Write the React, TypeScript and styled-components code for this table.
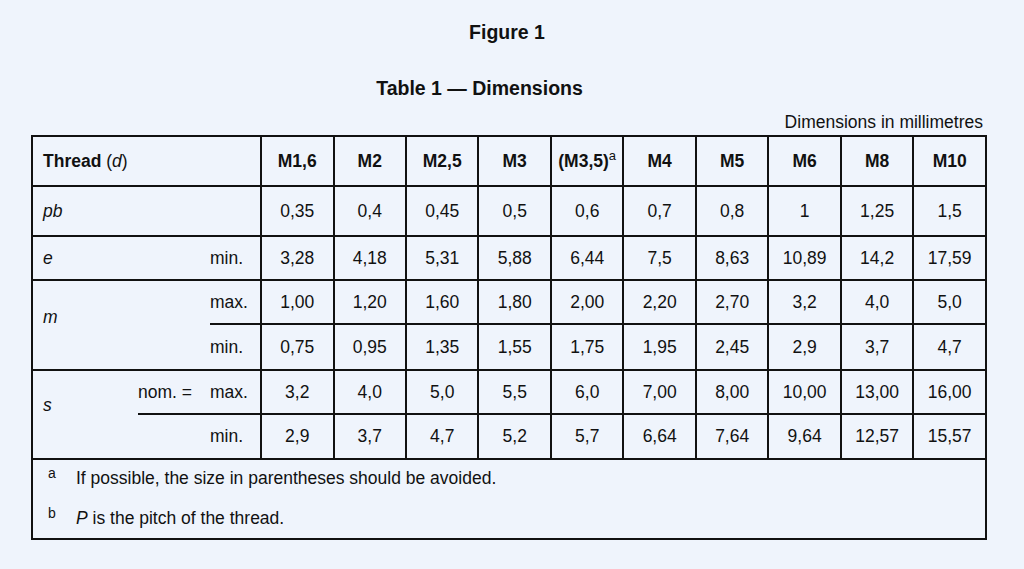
import React from 'react';
import styled, { createGlobalStyle } from 'styled-components';

const GlobalStyle = createGlobalStyle`
  body {
    margin: 0;
    background: #eff4fc;
    color: #111;
    font-family: 'Liberation Sans', Arial, sans-serif;
  }
`;

const Page = styled.main`
  padding: 21px 37px 0 31px;
`;

const FigureTitle = styled.h1`
  margin: 0;
  padding-right: 4px;
  font-size: 19.5px;
  line-height: 22px;
  font-weight: 700;
  text-align: center;
`;

const TableTitle = styled.h2`
  margin: 34px 0 0;
  padding-right: 59px;
  font-size: 19.5px;
  line-height: 22px;
  font-weight: 700;
  text-align: center;
`;

const Units = styled.p`
  margin: 13px 4px 3px 0;
  font-size: 17.5px;
  line-height: 20px;
  text-align: right;
`;

const Grid = styled.table`
  width: 956px;
  table-layout: fixed;
  border-collapse: collapse;
  border: 2px solid #111;
  font-size: 17.5px;
`;

const Row = styled.tr<{ $h: number }>`
  height: ${(p) => p.$h}px;
`;

type Sides = { $l?: boolean; $r?: boolean; $t?: boolean; $b?: boolean };

const edge = (on?: boolean) => (on === false ? 'none' : '2px solid #111');

const LabelCell = styled.td<Sides & { $lift?: number; $pad?: number }>`
  padding: 0 0 ${(p) => p.$lift ?? 0}px ${(p) => p.$pad ?? 0}px;
  vertical-align: middle;
  text-align: left;
  white-space: nowrap;
  border-left: ${(p) => edge(p.$l)};
  border-right: ${(p) => edge(p.$r)};
  border-top: ${(p) => edge(p.$t)};
  border-bottom: ${(p) => edge(p.$b)};
`;

const HeadCell = styled.th`
  padding: 0;
  border: 2px solid #111;
  font-weight: 700;
  text-align: center;
  white-space: nowrap;
`;

const ValueCell = styled.td`
  padding: 0;
  border: 2px solid #111;
  text-align: center;
  white-space: nowrap;
`;

const Symbol = styled.i`
  font-style: italic;
  font-weight: 400;
`;

const Light = styled.span`
  font-weight: 400;
`;

const Mark = styled.sup`
  font-size: 13px;
  font-weight: 400;
  vertical-align: 7px;
  line-height: 0;
`;

const NoteCell = styled.td`
  padding: 8px 0 10px 15px;
  border: 2px solid #111;
  vertical-align: top;
`;

const NoteList = styled.div`
  display: grid;
  grid-template-columns: 28px 1fr;
  row-gap: 20px;
  line-height: 20px;
`;

const NoteKey = styled.span`
  align-self: start;
  font-size: 14px;
  line-height: 10px;
`;

const heads = ['M1,6', 'M2', 'M2,5', 'M3', '(M3,5)', 'M4', 'M5', 'M6', 'M8', 'M10'];

const data = {
  pb: ['0,35', '0,4', '0,45', '0,5', '0,6', '0,7', '0,8', '1', '1,25', '1,5'],
  eMin: ['3,28', '4,18', '5,31', '5,88', '6,44', '7,5', '8,63', '10,89', '14,2', '17,59'],
  mMax: ['1,00', '1,20', '1,60', '1,80', '2,00', '2,20', '2,70', '3,2', '4,0', '5,0'],
  mMin: ['0,75', '0,95', '1,35', '1,55', '1,75', '1,95', '2,45', '2,9', '3,7', '4,7'],
  sMax: ['3,2', '4,0', '5,0', '5,5', '6,0', '7,00', '8,00', '10,00', '13,00', '16,00'],
  sMin: ['2,9', '3,7', '4,7', '5,2', '5,7', '6,64', '7,64', '9,64', '12,57', '15,57'],
};

const Values = ({ list }: { list: string[] }) => (
  <>
    {list.map((v, i) => (
      <ValueCell key={i}>{v}</ValueCell>
    ))}
  </>
);

export default function App() {
  return (
    <Page>
      <GlobalStyle />
      <FigureTitle>Figure 1</FigureTitle>
      <TableTitle>Table 1 — Dimensions</TableTitle>
      <Units>Dimensions in millimetres</Units>
      <Grid>
        <colgroup>
          <col style={{ width: 106 }} />
          <col style={{ width: 72 }} />
          <col style={{ width: 51 }} />
          {heads.map((h) => (
            <col key={h} />
          ))}
        </colgroup>
        <tbody>
          <Row $h={50}>
            <LabelCell colSpan={3} $pad={10}>
              <b>Thread</b> <Light>(<Symbol>d</Symbol>)</Light>
            </LabelCell>
            {heads.map((h) => (
              <HeadCell key={h}>
                {h}
                {h === '(M3,5)' && <Mark>a</Mark>}
              </HeadCell>
            ))}
          </Row>
          <Row $h={50}>
            <LabelCell colSpan={3} $pad={10}>
              <Symbol>pb</Symbol>
            </LabelCell>
            <Values list={data.pb} />
          </Row>
          <Row $h={44}>
            <LabelCell colSpan={2} $pad={10} $r={false}>
              <Symbol>e</Symbol>
            </LabelCell>
            <LabelCell $l={false}>min.</LabelCell>
            <Values list={data.eMin} />
          </Row>
          <Row $h={44}>
            <LabelCell rowSpan={2} colSpan={2} $pad={10} $lift={16} $r={false}>
              <Symbol>m</Symbol>
            </LabelCell>
            <LabelCell $l={false}>max.</LabelCell>
            <Values list={data.mMax} />
          </Row>
          <Row $h={46}>
            <LabelCell $l={false}>min.</LabelCell>
            <Values list={data.mMin} />
          </Row>
          <Row $h={44}>
            <LabelCell rowSpan={2} $pad={10} $lift={18} $r={false}>
              <Symbol>s</Symbol>
            </LabelCell>
            <LabelCell $l={false} $r={false}>
              nom. =
            </LabelCell>
            <LabelCell $l={false}>max.</LabelCell>
            <Values list={data.sMax} />
          </Row>
          <Row $h={45}>
            <LabelCell colSpan={2} $l={false} $pad={72}>
              min.
            </LabelCell>
            <Values list={data.sMin} />
          </Row>
          <Row $h={80}>
            <NoteCell colSpan={13}>
              <NoteList>
                <NoteKey>a</NoteKey>
                <span>If possible, the size in parentheses should be avoided.</span>
                <NoteKey>b</NoteKey>
                <span>
                  <Symbol>P</Symbol> is the pitch of the thread.
                </span>
              </NoteList>
            </NoteCell>
          </Row>
        </tbody>
      </Grid>
    </Page>
  );
}
